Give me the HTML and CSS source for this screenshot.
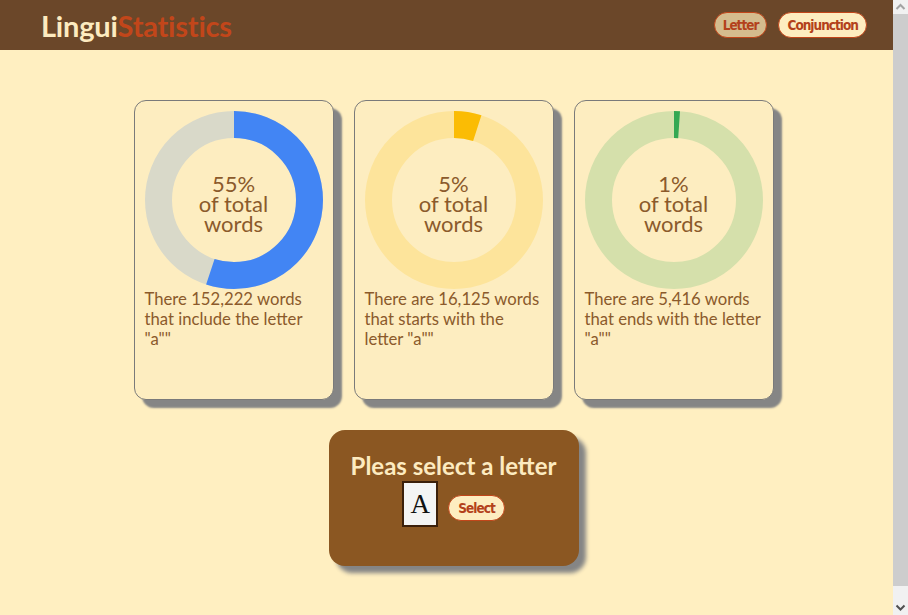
FILE: index.html
```html
<!DOCTYPE html>
<html lang="en">
<head>
<meta charset="utf-8">
<title>LinguiStatistics</title>
<link rel="stylesheet" href="styles.css">
</head>
<body>
<header class="topbar">
  <div class="logo"><span class="logo-a">Lingui</span><span class="logo-b">Statistics</span></div>
  <nav class="nav">
    <button class="pill pill-active">Letter</button>
    <button class="pill">Conjunction</button>
  </nav>
</header>
<main class="main">
  <section class="cards">
    <div class="card">
      <div class="donut">
        <svg width="178" height="178" viewBox="0 0 178 178">
          <circle cx="89" cy="89" r="75.5" fill="none" stroke="#d9d9c9" stroke-width="27"/>
          <circle cx="89" cy="89" r="75.5" fill="none" stroke="#4285f4" stroke-width="27" stroke-dasharray="260.9 474.4" transform="rotate(-90 89 89)"/>
        </svg>
        <div class="donut-label">55%<br>of total<br>words</div>
      </div>
      <p class="card-text">There 152,222 words that include the letter "a""</p>
    </div>
    <div class="card">
      <div class="donut">
        <svg width="178" height="178" viewBox="0 0 178 178">
          <circle cx="89" cy="89" r="75.5" fill="none" stroke="#fde49b" stroke-width="27"/>
          <circle cx="89" cy="89" r="75.5" fill="none" stroke="#fbbc04" stroke-width="27" stroke-dasharray="23.7 474.4" transform="rotate(-90 89 89)"/>
        </svg>
        <div class="donut-label">5%<br>of total<br>words</div>
      </div>
      <p class="card-text">There are 16,125 words that starts with the letter "a""</p>
    </div>
    <div class="card">
      <div class="donut">
        <svg width="178" height="178" viewBox="0 0 178 178">
          <circle cx="89" cy="89" r="75.5" fill="none" stroke="#d5e0ab" stroke-width="27"/>
          <circle cx="89" cy="89" r="75.5" fill="none" stroke="#34a853" stroke-width="27" stroke-dasharray="5.2 474.4" transform="rotate(-90 89 89)"/>
        </svg>
        <div class="donut-label">1%<br>of total<br>words</div>
      </div>
      <p class="card-text">There are 5,416 words that ends with the letter "a""</p>
    </div>
  </section>
  <section class="picker">
    <h2 class="picker-title">Pleas select a letter</h2>
    <div class="picker-row">
      <div class="letter-box">A</div>
      <button class="pill pill-small">Select</button>
    </div>
  </section>
</main>
<div class="scrollbar" aria-hidden="true">
  <div class="sb-btn">
    <svg width="15" height="14" viewBox="0 0 15 14"><path d="M3.5 9 L7.5 5 L11.5 9" fill="none" stroke="#a3a3a3" stroke-width="2"/></svg>
  </div>
  <div class="sb-track"><div class="sb-thumb"></div></div>
  <div class="sb-btn">
    <svg width="15" height="15" viewBox="0 0 15 15"><path d="M3.5 5.5 L7.5 9.5 L11.5 5.5" fill="none" stroke="#505050" stroke-width="2"/></svg>
  </div>
</div>
</body>
</html>
```
FILE: styles.css
```css
html {
  overflow: hidden;
}
html, body {
  margin: 0;
  padding: 0;
}
body {
  background: #ffefc1;
  font-family: Lato, "Open Sans", sans-serif;
  margin-right: 15px;
  min-height: 615px;
}
.topbar {
  height: 50px;
  background: #6b4729;
  display: flex;
  align-items: center;
  justify-content: space-between;
  padding: 0 26px 0 41px;
}
.logo {
  font-size: 29px;
  font-weight: 700;
  letter-spacing: -0.2px;
  line-height: 1;
  padding-top: 1px;
}
.logo-a { color: #fdebc0; }
.logo-b { color: #c2461a; }
.nav {
  display: flex;
  gap: 11px;
  margin-top: -1px;
}
.pill {
  font-family: "DejaVu Sans Condensed", "DejaVu Sans", sans-serif;
  font-stretch: condensed;
  font-weight: 700;
  font-size: 13.5px;
  letter-spacing: -1px;
  color: #b3411b;
  background: #fdedc0;
  border: 1px solid #c2461a;
  border-radius: 14px;
  height: 26px;
  padding: 0 8px;
  cursor: pointer;
}
.pill-active {
  background: #d4bc8e;
}
.main {
  display: flex;
  flex-direction: column;
  align-items: center;
  padding: 50px 0 40px 14px;
}
.cards {
  display: flex;
  gap: 20px;
}
.card {
  width: 178px;
  height: 278px;
  padding: 10px;
  background: #fdedc0;
  border: 1px solid #7a7a7a;
  border-radius: 12px;
  box-shadow: 8px 8px 2px #858585;
}
.donut {
  position: relative;
  width: 178px;
  height: 178px;
}
.donut svg {
  display: block;
}
.donut-label {
  position: absolute;
  left: 0;
  right: 0;
  top: 63px;
  text-align: center;
  font-size: 22px;
  line-height: 20px;
  color: #8b5a2b;
}
.card-text {
  margin: 0;
  font-size: 16.7px;
  line-height: 20px;
  color: #8b5a2b;
}
.picker {
  margin-top: 30px;
  width: 250px;
  height: 136px;
  box-sizing: border-box;
  background: #8b5722;
  border-radius: 16px;
  box-shadow: 7px 7px 4px #858585;
  display: flex;
  flex-direction: column;
  align-items: center;
  padding-top: 21px;
}
.picker-title {
  margin: 0;
  font-size: 24px;
  font-weight: 700;
  line-height: 30px;
  color: #fdebc0;
}
.picker-row {
  display: flex;
  align-items: center;
  gap: 10px;
}
.letter-box {
  width: 32px;
  height: 42px;
  border: 2px solid #3b1f0a;
  background: #f4f4f4;
  font-family: "Liberation Serif", serif;
  font-size: 27px;
  line-height: 42px;
  text-align: center;
  color: #111;
}
.pill-small {
  height: 26px;
  padding: 0 9px;
  margin-top: 8px;
}
.scrollbar {
  position: fixed;
  top: 0;
  right: 0;
  width: 15px;
  height: 100%;
  background: #f1f1f1;
  display: flex;
  flex-direction: column;
}
.sb-btn {
  height: 14px;
  flex: none;
}
.sb-btn:last-child {
  height: 15px;
}
.sb-btn svg {
  display: block;
}
.sb-track {
  flex: 1;
  display: flex;
  flex-direction: column;
}
.sb-thumb {
  height: 572px;
  background: #cdcdcd;
}
```
